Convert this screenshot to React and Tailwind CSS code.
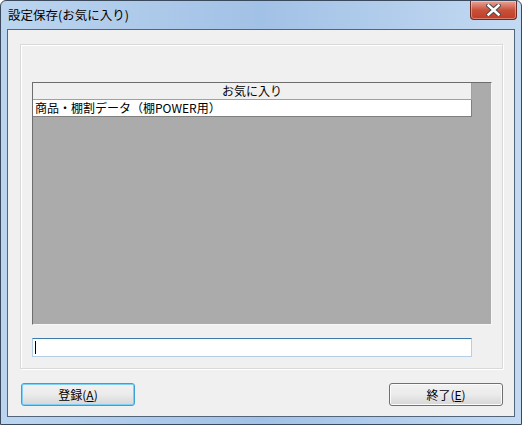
import { useState } from "react";

const jp = { fontFamily: '"Noto Sans CJK JP", "Noto Sans", sans-serif' };

function CloseButton() {
  return (
    <div className="absolute right-[4px] top-0 w-[47px] h-[19px] rounded-b-[4px] border border-t-0 border-[#6b2a22] bg-gradient-to-b from-[#e8a497] via-[#c8513c] to-[#c23b22] flex items-center justify-center shadow-[inset_0_0_0_1px_rgba(255,255,255,0.35)]">
      <svg width="15" height="12" viewBox="0 0 15 12">
        <path
          d="M2.5 1.5 L12.5 10.5 M12.5 1.5 L2.5 10.5"
          stroke="#4a4a4a"
          strokeWidth="4.5"
          strokeLinecap="square"
        />
        <path
          d="M2.5 1.5 L12.5 10.5 M12.5 1.5 L2.5 10.5"
          stroke="#ffffff"
          strokeWidth="2.5"
          strokeLinecap="square"
        />
      </svg>
    </div>
  );
}

function Button({ label, hot, focused }) {
  return (
    <button
      className={
        "w-[114px] h-[23px] rounded-[3px] border bg-gradient-to-b from-[#f2f2f2] via-[#ebebeb] to-[#d6d6d6] text-[12px] text-black flex items-center justify-center " +
        (focused
          ? "border-[#3c9fd6] shadow-[inset_0_0_0_1px_#7fd0f7]"
          : "border-[#707070] shadow-[inset_0_0_0_1px_#fcfcfc]")
      }
      style={jp}
    >
      {label}(<span className="underline">{hot}</span>)
    </button>
  );
}

export default function App() {
  const [text, setText] = useState("");
  return (
    <div className="w-[522px] h-[425px] relative rounded-t-[6px] border border-[#3a4a5c] bg-gradient-to-r from-[#bcd5ef] via-[#a2c1e6] to-[#c3daf2] flex flex-col px-[6px] pb-[7px]">
      <div className="h-[28px] flex items-center pl-[1px] text-[12.5px] text-black" style={jp}>
        設定保存(お気に入り)
      </div>
      <CloseButton />
      <div className="flex-1 border border-[#53657a] bg-[#f0f0f0] flex flex-col">
        <div className="mt-[14px] ml-[12px] w-[483px] h-[325px] border border-[#d9d9d9] shadow-[inset_1px_1px_0_#ffffff,1px_1px_0_#ffffff] flex flex-col">
          <div className="mt-[37px] ml-[11px] w-[460px] h-[243px] bg-[#ababab] border-t border-l border-[#6d6d6d] border-b border-r border-b-[#f7f7f7] border-r-[#f7f7f7] flex flex-col">
            <div
              className="w-[439px] h-[17px] bg-[#f0f0f0] border-b border-r border-[#a0a0a0] flex items-center justify-center text-[12px] leading-none text-black"
              style={jp}
            >
              お気に入り
            </div>
            <div
              className="w-[439px] h-[17px] bg-white border-b border-r border-[#808080] flex items-center pl-[2px] text-[12px] leading-none text-black"
              style={jp}
            >
              商品・棚割データ（棚POWER用）
            </div>
          </div>
          <div className="relative mt-[13px] ml-[11px] w-[440px] h-[19px]">
            <input
              value={text}
              onChange={(e) => setText(e.target.value)}
              className="block w-full h-full bg-white border border-[#b5cfe7] border-t-[#3d7bad] outline-none px-[2px] text-[12px] caret-transparent"
              style={jp}
            />
            <span className="absolute left-[3px] top-[3px] w-px h-[13px] bg-black" />
          </div>
        </div>
        <div className="mt-[14px] pl-[13px] pr-[11px] flex justify-between">
          <Button label="登録" hot="A" focused />
          <Button label="終了" hot="E" />
        </div>
      </div>
    </div>
  );
}
